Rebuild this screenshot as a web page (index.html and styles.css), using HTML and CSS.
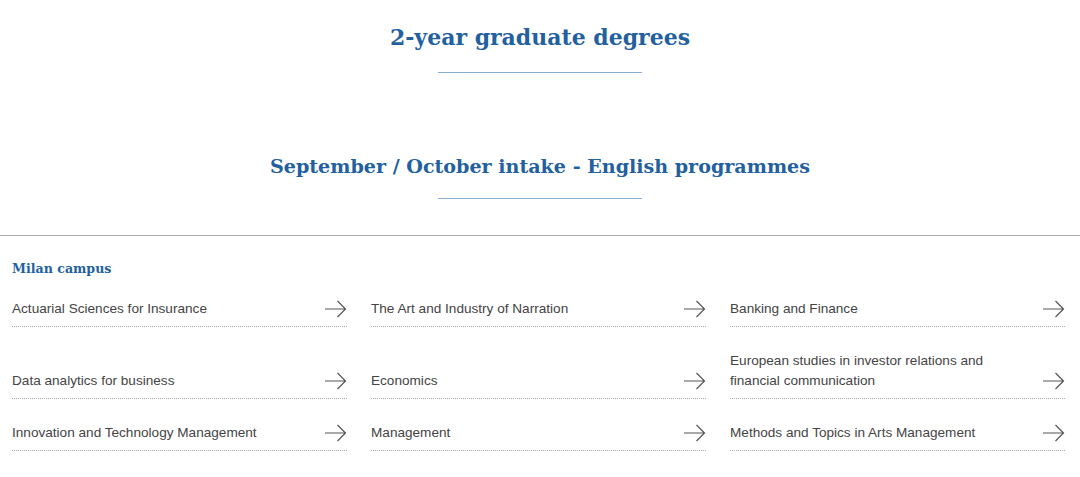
FILE: index.html
```html
<!DOCTYPE html>
<html lang="en">
<head>
<meta charset="utf-8">
<title>2-year graduate degrees</title>
<link rel="stylesheet" href="styles.css">
</head>
<body>
<main class="page">
  <header class="intro">
    <h1 class="title">2-year graduate degrees</h1>
    <span class="rule"></span>
  </header>
  <section class="intake">
    <h2 class="subtitle">September / October intake - English programmes</h2>
    <span class="rule rule-sub"></span>
  </section>
  <section class="campus">
    <h3 class="campus-name">Milan campus</h3>
    <ul class="programmes">
      <li class="item"><a class="link" href="#"><span class="label">Actuarial Sciences for Insurance</span><svg class="arrow" viewBox="0 0 22 18"><path d="M0 9H20.5M12.5 1L20.5 9L12.5 17"/></svg></a></li>
      <li class="item"><a class="link" href="#"><span class="label">The Art and Industry of Narration</span><svg class="arrow" viewBox="0 0 22 18"><path d="M0 9H20.5M12.5 1L20.5 9L12.5 17"/></svg></a></li>
      <li class="item"><a class="link" href="#"><span class="label">Banking and Finance</span><svg class="arrow" viewBox="0 0 22 18"><path d="M0 9H20.5M12.5 1L20.5 9L12.5 17"/></svg></a></li>
      <li class="item"><a class="link" href="#"><span class="label">Data analytics for business</span><svg class="arrow" viewBox="0 0 22 18"><path d="M0 9H20.5M12.5 1L20.5 9L12.5 17"/></svg></a></li>
      <li class="item"><a class="link" href="#"><span class="label">Economics</span><svg class="arrow" viewBox="0 0 22 18"><path d="M0 9H20.5M12.5 1L20.5 9L12.5 17"/></svg></a></li>
      <li class="item"><a class="link" href="#"><span class="label">European studies in investor relations and financial communication</span><svg class="arrow" viewBox="0 0 22 18"><path d="M0 9H20.5M12.5 1L20.5 9L12.5 17"/></svg></a></li>
      <li class="item"><a class="link" href="#"><span class="label">Innovation and Technology Management</span><svg class="arrow" viewBox="0 0 22 18"><path d="M0 9H20.5M12.5 1L20.5 9L12.5 17"/></svg></a></li>
      <li class="item"><a class="link" href="#"><span class="label">Management</span><svg class="arrow" viewBox="0 0 22 18"><path d="M0 9H20.5M12.5 1L20.5 9L12.5 17"/></svg></a></li>
      <li class="item"><a class="link" href="#"><span class="label">Methods and Topics in Arts Management</span><svg class="arrow" viewBox="0 0 22 18"><path d="M0 9H20.5M12.5 1L20.5 9L12.5 17"/></svg></a></li>
    </ul>
  </section>
</main>
</body>
</html>
```
FILE: styles.css
```css
* { box-sizing: border-box; }
html, body { margin: 0; padding: 0; background: #fff; }
body { font-family: "Liberation Sans", Arial, sans-serif; color: #444; }

.page { width: 1080px; }

.intro, .intake {
  display: flex;
  flex-direction: column;
  align-items: center;
}

.title {
  margin: 22px 0 0;
  font-family: "DejaVu Serif", Georgia, serif;
  font-weight: bold;
  font-size: 22px;
  line-height: 30px;
  color: #22609f;
}

.rule {
  display: block;
  width: 204px;
  height: 1px;
  margin-top: 20px;
  background: #86acd4;
}

.intake { margin-top: 81px; }

.subtitle {
  margin: 0;
  font-family: "DejaVu Serif", Georgia, serif;
  font-weight: bold;
  font-size: 19.1px;
  line-height: 26px;
  color: #22609f;
}

.rule-sub { margin-top: 18px; }

.campus {
  margin-top: 36px;
  border-top: 1px solid #ababab;
  padding: 23px 15px 0 12px;
}

.campus-name {
  margin: 0;
  font-family: "DejaVu Serif", Georgia, serif;
  font-weight: bold;
  font-size: 12.6px;
  line-height: 20px;
  color: #22609f;
}

.programmes {
  list-style: none;
  margin: 0;
  padding: 0;
  display: grid;
  grid-template-columns: repeat(3, 1fr);
  column-gap: 24px;
  row-gap: 4px;
}

.item { display: flex; }

.link {
  flex: 1;
  display: flex;
  align-items: flex-end;
  justify-content: space-between;
  gap: 16px;
  padding: 20px 0 7px;
  border-bottom: 1px dotted #aaa;
  text-decoration: none;
  color: #444;
  font-size: 13.6px;
  line-height: 20px;
}

.arrow {
  flex: none;
  width: 22px;
  height: 18px;
  margin-bottom: 1px;
  fill: none;
  stroke: #555;
  stroke-width: 1.2;
}
```
